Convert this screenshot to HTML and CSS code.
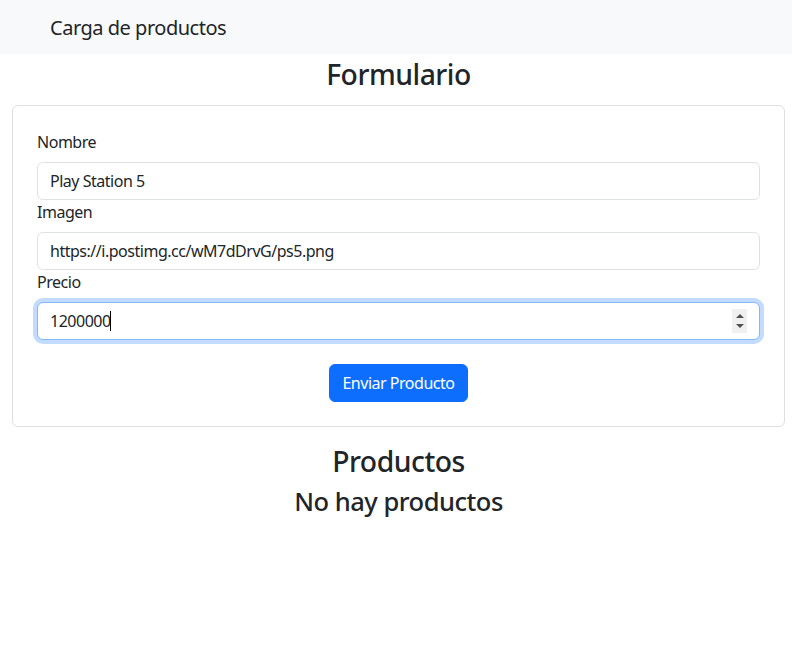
FILE: index.html
```html
<!DOCTYPE html>
<html lang="es">
<head>
<meta charset="utf-8">
<title>Carga de productos</title>
<link rel="stylesheet" href="styles.css">
</head>
<body>
<nav class="navbar">
  <div class="navbar-inner">
    <span class="brand">Carga de productos</span>
  </div>
</nav>
<main class="main">
  <h2 class="title">Formulario</h2>
  <form class="card">
    <label class="label" for="nombre">Nombre</label>
    <input class="input" id="nombre" type="text" value="Play Station 5">
    <label class="label" for="imagen">Imagen</label>
    <input class="input" id="imagen" type="text" value="https://i.postimg.cc/wM7dDrvG/ps5.png">
    <label class="label" for="precio">Precio</label>
    <div class="number-wrap">
      <input class="input input-focus input-number" id="precio" type="number" value="1200000">
      <span class="caret-mark" aria-hidden="true"></span>
      <span class="spinner" aria-hidden="true"><span class="tri-up"></span><span class="tri-down"></span></span>
    </div>
    <div class="actions">
      <button class="btn" type="button">Enviar Producto</button>
    </div>
  </form>
  <h2 class="title">Productos</h2>
  <h3 class="subtitle">No hay productos</h3>
</main>
</body>
</html>
```
FILE: styles.css
```css
* { box-sizing: border-box; }
body {
  margin: 0;
  font-family: "Noto Sans", "Open Sans", sans-serif;
  font-size: 16px;
  line-height: 1.5;
  letter-spacing: -0.03em;
  color: #212529;
  background: #fff;
}
.navbar {
  background: #f8f9fa;
  padding: 8px 0 6px;
}
.navbar-inner {
  width: 720px;
  margin: 0 auto;
  padding: 0 12px 0 14px;
}
.brand {
  display: inline-block;
  padding: 5px 0;
  font-size: 20px;
  line-height: 30px;
}
.main {
  margin: 0 7px 0 12px;
}
.title {
  margin: 0 0 5px;
  padding-top: 3px;
  font-size: 28.3px;
  font-weight: 500;
  line-height: 34px;
  text-align: center;
}
.subtitle {
  margin: 0 0 8px;
  padding-top: 3px;
  font-size: 25.5px;
  font-weight: 500;
  line-height: 30.6px;
  text-align: center;
}
.card {
  margin: 14px 0 14px;
  padding: 24px;
  border: 1px solid #dfdfdf;
  border-radius: 6px;
  display: flex;
  flex-direction: column;
}
.label {
  display: block;
  margin-bottom: 8px;
}
.input {
  display: block;
  width: 100%;
  height: 38px;
  padding: 6px 12px;
  font: inherit;
  letter-spacing: -0.03em;
  color: #212529;
  border: 1px solid #dee2e6;
  border-radius: 6px;
  background: #fff;
  outline: none;
}
.input-focus {
  border-color: #86b7fe;
  box-shadow: 0 0 0 4px rgba(13, 110, 253, 0.25);
}
.input-number {
  -moz-appearance: textfield;
}
.input-number::-webkit-inner-spin-button,
.input-number::-webkit-outer-spin-button {
  -webkit-appearance: none;
  margin: 0;
}
.number-wrap {
  position: relative;
}
.caret-mark {
  position: absolute;
  left: 73px;
  top: 9px;
  width: 1px;
  height: 20px;
  background: #000;
}
.spinner {
  position: absolute;
  right: 13px;
  top: 7px;
  width: 15px;
  height: 24px;
  background: #f0f0f0;
  display: flex;
  flex-direction: column;
  align-items: center;
  justify-content: center;
  gap: 6px;
}
.tri-up {
  width: 0;
  height: 0;
  border-left: 4px solid transparent;
  border-right: 4px solid transparent;
  border-bottom: 4px solid #505050;
}
.tri-down {
  width: 0;
  height: 0;
  border-left: 4px solid transparent;
  border-right: 4px solid transparent;
  border-top: 4px solid #505050;
}
.actions {
  display: flex;
  justify-content: center;
  margin-top: 24px;
}
.btn {
  font: inherit;
  letter-spacing: -0.03em;
  color: #fff;
  background: #0d6efd;
  border: 1px solid #0d6efd;
  border-radius: 6px;
  padding: 6px 12px;
  height: 38px;
  cursor: pointer;
}
```
